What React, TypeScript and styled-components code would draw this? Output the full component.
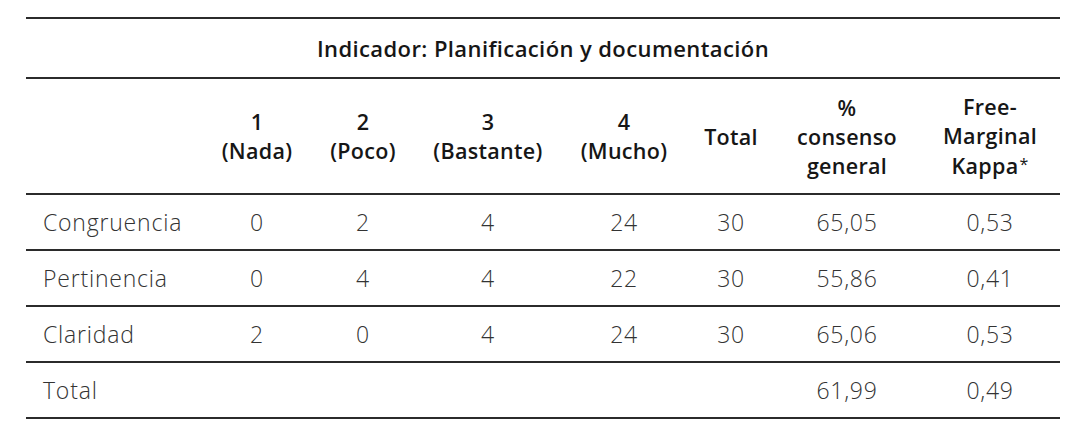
import React from "react";
import styled, { createGlobalStyle } from "styled-components";

const Global = createGlobalStyle`
  html, body { margin: 0; padding: 0; background: #ffffff; }
  body { font-family: "Open Sans", "Noto Sans", sans-serif; }
`;

const COLS = "178px 106px 106px 144px 128px 86px 146px 140px";

const Page = styled.div`
  padding: 17px 16px 0 26px;
  width: 1034px;
`;

const Table = styled.div`
  border-top: 2px solid #2b2b2b;
  width: 1034px;
`;

const TitleRow = styled.div`
  height: 58px;
  border-bottom: 2px solid #2b2b2b;
  display: flex;
  align-items: center;
  justify-content: center;
  font-size: 22px;
  letter-spacing: 0.4px;
  font-weight: 600;
  color: #161616;
`;

const Row = styled.div<{ $h: number }>`
  display: grid;
  grid-template-columns: ${COLS};
  height: ${(p) => p.$h}px;
  border-bottom: 2px solid #2b2b2b;
  align-items: center;
`;

const HeadCell = styled.div`
  text-align: center;
  font-size: 21.5px;
  letter-spacing: 0.3px;
  font-weight: 600;
  line-height: 29px;
  color: #161616;
`;

const Star = styled.span`
  font-size: 16px;
  font-weight: 400;
  vertical-align: 4px;
  margin-left: 1px;
`;

const LabelCell = styled.div`
  padding-left: 17px;
  font-size: 23px;
  letter-spacing: 0.8px;
  font-weight: 300;
  color: #333333;
`;

const NumCell = styled.div`
  text-align: center;
  font-size: 23px;
  letter-spacing: 0.7px;
  font-weight: 300;
  color: #333333;
`;

const headers: React.ReactNode[] = [
  <>1<br />(Nada)</>,
  <>2<br />(Poco)</>,
  <>3<br />(Bastante)</>,
  <>4<br />(Mucho)</>,
  <>Total</>,
  <>%<br />consenso<br />general</>,
  <>Free-<br />Marginal<br />Kappa<Star>*</Star></>,
];

const rows: { label: string; values: string[] }[] = [
  { label: "Congruencia", values: ["0", "2", "4", "24", "30", "65,05", "0,53"] },
  { label: "Pertinencia", values: ["0", "4", "4", "22", "30", "55,86", "0,41"] },
  { label: "Claridad", values: ["2", "0", "4", "24", "30", "65,06", "0,53"] },
  { label: "Total", values: ["", "", "", "", "", "61,99", "0,49"] },
];

export default function App() {
  return (
    <Page>
      <Global />
      <Table>
        <TitleRow>Indicador: Planificación y documentación</TitleRow>
        <Row $h={114}>
          <div />
          {headers.map((h, i) => (
            <HeadCell key={i}>{h}</HeadCell>
          ))}
        </Row>
        {rows.map((r) => (
          <Row $h={54} key={r.label}>
            <LabelCell>{r.label}</LabelCell>
            {r.values.map((v, i) => (
              <NumCell key={i}>{v}</NumCell>
            ))}
          </Row>
        ))}
      </Table>
    </Page>
  );
}
